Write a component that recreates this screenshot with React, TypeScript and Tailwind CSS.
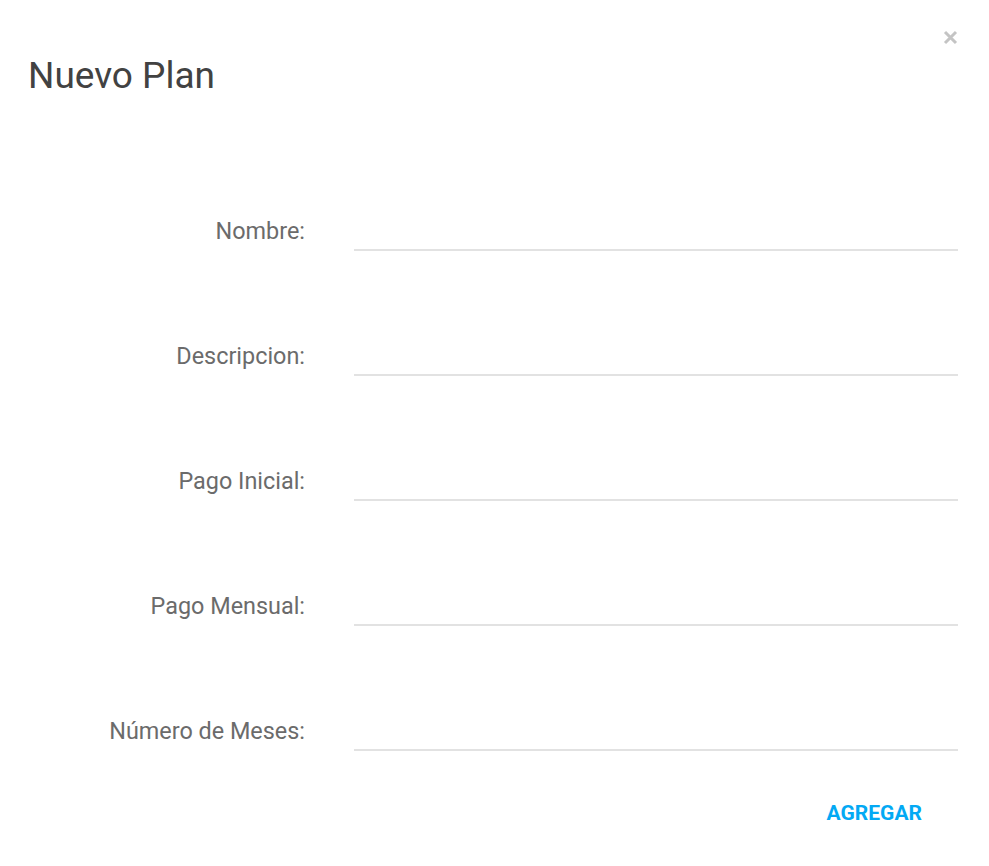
import React from "react";

const fields = ["Nombre:", "Descripcion:", "Pago Inicial:", "Pago Mensual:", "Número de Meses:"];

export default function App() {
  return (
    <div className="relative w-full h-[866px] bg-white" style={{ fontFamily: "Roboto, 'Liberation Sans', sans-serif" }}>
      <button className="absolute top-[30px] left-[943px] w-[15px] h-[15px]" aria-label="close">
        <svg width="15" height="15" viewBox="0 0 15 15">
          <path d="M2 2 L13 13 M13 2 L2 13" stroke="#c4c4c4" strokeWidth="3" strokeLinecap="butt" />
        </svg>
      </button>
      <div className="h-[126px] pl-[28px] pt-[57px]">
        <h1 className="text-[37px] leading-none text-[#424242] font-normal">Nuevo Plan</h1>
      </div>
      <div className="pr-[31px]">
        {fields.map((f) => (
          <div key={f} className="flex items-end h-[125px]">
            <label className="w-[305px] shrink-0 text-right text-[23.4px] leading-none text-[#6b6b6b] pb-[8px]">{f}</label>
            <div className="ml-[49px] flex-1 h-[40px] border-b-2 border-[#e2e2e2]" />
          </div>
        ))}
        <div className="flex justify-end pr-[36px] mt-[52px]">
          <button className="text-[21px] leading-none font-bold text-[#03a9f4]">AGREGAR</button>
        </div>
      </div>
    </div>
  );
}
